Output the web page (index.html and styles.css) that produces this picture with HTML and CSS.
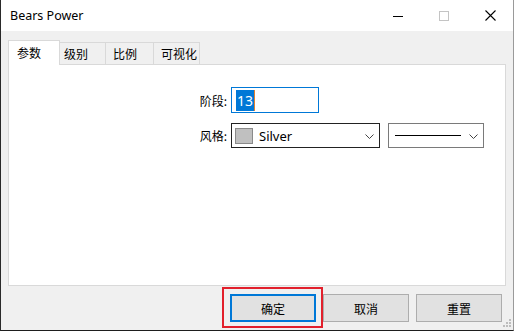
FILE: index.html
```html
<!DOCTYPE html>
<html lang="zh">
<head>
<meta charset="utf-8">
<title>Bears Power</title>
<link rel="stylesheet" href="styles.css">
</head>
<body>
<div class="window">
  <div class="titlebar">
    <div class="title">Bears Power</div>
    <div class="caption">
      <div class="cap-btn"><svg width="10" height="10" viewBox="0 0 10 10"><path d="M0 5.5h10" stroke="#000" stroke-width="1"/></svg></div>
      <div class="cap-btn"><svg width="10" height="10" viewBox="0 0 10 10"><rect x="0.5" y="0.5" width="9" height="9" fill="none" stroke="#c4c4c4" stroke-width="1"/></svg></div>
      <div class="cap-btn"><svg width="11" height="11" viewBox="0 0 11 11"><path d="M0.5 0.5l10 10M10.5 0.5l-10 10" stroke="#000" stroke-width="1.1"/></svg></div>
    </div>
  </div>
  <div class="content">
    <div class="tabs">
      <div class="tab tab-active">参数</div>
      <div class="tab tab-2">级别</div>
      <div class="tab tab-3">比例</div>
      <div class="tab tab-4">可视化</div>
    </div>
    <div class="panel">
      <div class="row row-period">
        <div class="label">阶段:</div>
        <div class="input"><span class="sel">13</span><span class="caret"></span></div>
      </div>
      <div class="row row-style">
        <div class="label">风格:</div>
        <div class="combo combo-color">
          <span class="swatch"></span>
          <span class="combo-text">Silver</span>
          <svg class="chev" width="9" height="5" viewBox="0 0 9 5"><path d="M0.5 0.5l4 4 4-4" fill="none" stroke="#444" stroke-width="1"/></svg>
        </div>
        <div class="combo combo-line">
          <span class="line"></span>
          <svg class="chev" width="9" height="5" viewBox="0 0 9 5"><path d="M0.5 0.5l4 4 4-4" fill="none" stroke="#444" stroke-width="1"/></svg>
        </div>
      </div>
    </div>
    <div class="buttons">
      <div class="btn-wrap"><div class="btn btn-default">确定</div></div>
      <div class="btn">取消</div>
      <div class="btn">重置</div>
    </div>
  </div>
  <svg class="grip" width="8" height="8" viewBox="0 0 8 8">
    <rect x="6" y="0" width="2" height="2" fill="#bdbdbd"/>
    <rect x="3" y="3" width="2" height="2" fill="#bdbdbd"/>
    <rect x="6" y="3" width="2" height="2" fill="#bdbdbd"/>
    <rect x="0" y="6" width="2" height="2" fill="#bdbdbd"/>
    <rect x="3" y="6" width="2" height="2" fill="#bdbdbd"/>
    <rect x="6" y="6" width="2" height="2" fill="#bdbdbd"/>
  </svg>
</div>
</body>
</html>
```

FILE: styles.css
```css
* { box-sizing: border-box; }
html, body { margin: 0; padding: 0; }
body {
  width: 514px;
  height: 331px;
  overflow: hidden;
  background: #1e1e1e;
  font-family: "Noto Sans", "Noto Sans CJK SC", sans-serif;
  font-size: 12px;
  color: #000;
}
.window {
  position: relative;
  width: 514px;
  height: 331px;
  background: #f0f0f0;
  border-left: 1px solid #2a2a2a;
  border-right: 1px solid #9a9a9a;
  border-bottom: 1px solid #1e1e1e;
  display: flex;
  flex-direction: column;
}
.titlebar {
  height: 31px;
  background: #fff;
  display: flex;
  align-items: center;
  justify-content: space-between;
}
.title {
  padding-left: 9px;
  font-size: 12.5px;
  padding-bottom: 1px;
}
.caption { display: flex; height: 100%; }
.cap-btn {
  width: 46px;
  height: 100%;
  display: flex;
  align-items: center;
  justify-content: center;
}
.content {
  padding: 9px 7px 0 7px;
  display: flex;
  flex-direction: column;
}
.tabs {
  display: flex;
  align-items: flex-end;
  height: 24px;
  position: relative;
  z-index: 1;
}
.tab {
  height: 22px;
  border: 1px solid #d9d9d9;
  border-bottom: none;
  border-left: none;
  background: #f0f0f0;
  font-family: "Noto Sans CJK SC", sans-serif;
  line-height: 20px;
  padding-top: 1px;
}
.tab-active {
  width: 52px;
  height: 25px;
  margin-bottom: -1px;
  background: #fff;
  border-left: 1px solid #d9d9d9;
  padding-left: 8px;
  line-height: 21px;
  padding-top: 1px;
}
.tab-2 { width: 46px; padding-left: 4px; }
.tab-3 { width: 48px; padding-left: 7px; }
.tab-4 { width: 46px; padding-left: 7px; }
.panel {
  width: 498px;
  height: 222px;
  background: #fff;
  border: 1px solid #d9d9d9;
  padding: 22px 0 0 184px;
  display: flex;
  flex-direction: column;
  gap: 10px;
}
.row { display: flex; align-items: center; }
.label {
  width: 38px;
  text-align: right;
  padding-right: 4px;
  font-family: "Noto Sans CJK SC", sans-serif;
}
.input {
  width: 88px;
  height: 26px;
  border: 1px solid #0078d7;
  display: flex;
  align-items: center;
  padding-left: 4px;
}
.sel {
  background: #0078d7;
  color: #fff;
  font-size: 14px;
  line-height: 21px;
  height: 21px;
  padding: 0 1px;
}
.caret {
  width: 1px;
  height: 21px;
  background: #e08030;
}
.row-style { gap: 8px; }
.row-style .label { margin-right: -8px; }
.combo {
  height: 25px;
  display: flex;
  align-items: center;
  position: relative;
}
.combo-color {
  width: 149px;
  border: 1px solid #222;
  padding-left: 3px;
}
.swatch {
  width: 18px;
  height: 16px;
  background: #c0c0c0;
  border: 1px solid #8a8a8a;
}
.combo-text {
  margin-left: 6px;
  font-size: 13px;
}
.chev { position: absolute; right: 5px; top: 10px; }
.combo-line {
  width: 96px;
  border: 1px solid #7a7a7a;
  padding-left: 6px;
}
.line {
  width: 66px;
  height: 1px;
  background: #000;
}
.buttons {
  display: flex;
  justify-content: flex-end;
  gap: 7px;
  padding-top: 8px;
  padding-right: 4px;
}
.btn {
  width: 86px;
  height: 28px;
  background: #e1e1e1;
  border: 1px solid #adadad;
  display: flex;
  align-items: center;
  justify-content: center;
  font-family: "Noto Sans CJK SC", sans-serif;
}
.btn-default { border: 2px solid #0078d7; }
.btn-wrap { position: relative; }
.btn-wrap::after {
  content: "";
  position: absolute;
  left: -8px;
  top: -7px;
  right: -7px;
  bottom: -6px;
  border: 2px solid #e2202c;
}
.grip { position: absolute; right: 2px; bottom: 3px; }
```
